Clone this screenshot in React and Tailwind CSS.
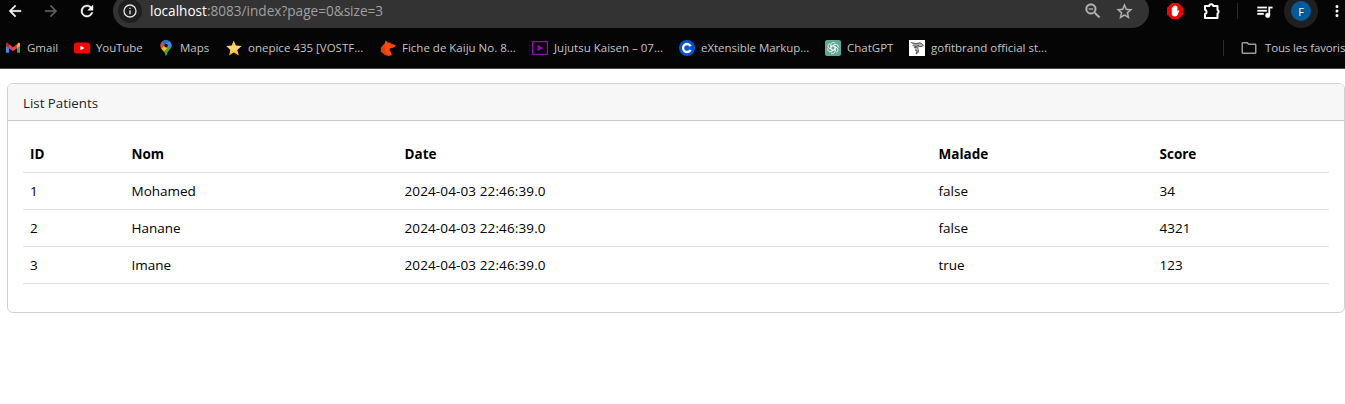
const PATIENTS = [
  { id: 1, nom: 'Mohamed', date: '2024-04-03 22:46:39.0', malade: 'false', score: 34 },
  { id: 2, nom: 'Hanane', date: '2024-04-03 22:46:39.0', malade: 'false', score: 4321 },
  { id: 3, nom: 'Imane', date: '2024-04-03 22:46:39.0', malade: 'true', score: 123 },
];

function Icon({ d, className }) {
  return (
    <svg viewBox="0 0 24 24" fill="currentColor" className={`block shrink-0 ${className}`}>
      <path d={d} />
    </svg>
  );
}

const BACK = 'M20 11H7.83l5.59-5.59L12 4l-8 8 8 8 1.41-1.41L7.83 13H20v-2z';
const FORWARD = 'M12 4l-1.41 1.41L16.17 11H4v2h12.17l-5.58 5.59L12 20l8-8z';
const RELOAD =
  'M17.65 6.35A7.96 7.96 0 0 0 12 4a8 8 0 1 0 7.73 10h-2.08A6 6 0 1 1 12 6c1.66 0 3.14.69 4.22 1.78L13 11h7V4l-2.35 2.35z';
const INFO =
  'M11 7h2v2h-2zm0 4h2v6h-2zm1-9a10 10 0 1 0 0 20 10 10 0 0 0 0-20zm0 18a8 8 0 1 1 0-16 8 8 0 0 1 0 16z';
const ZOOM_OUT =
  'M15.5 14h-.79l-.28-.27A6.47 6.47 0 0 0 16 9.5 6.5 6.5 0 1 0 9.5 16c1.61 0 3.09-.59 4.23-1.57l.27.28v.79l5 4.99L20.49 19l-4.99-5zm-6 0a4.5 4.5 0 1 1 0-9 4.5 4.5 0 0 1 0 9zM7 9h5v1.2H7z';
const STAR =
  'M22 9.24l-7.19-.62L12 2 9.19 8.63 2 9.24l5.46 4.73L5.82 21 12 17.27 18.18 21l-1.63-7.03L22 9.24zM12 15.4l-3.76 2.27 1-4.28-3.32-2.88 4.38-.38L12 6.1l1.71 4.04 4.38.38-3.32 2.88 1 4.28L12 15.4z';
const QUEUE =
  'M15 6H3v2h12V6zm0 4H3v2h12v-2zM3 16h8v-2H3v2zM17 6v8.18c-.31-.11-.65-.18-1-.18a3 3 0 1 0 3 3V8h3V6h-5z';
const DOTS =
  'M12 8a2 2 0 1 0 0-4 2 2 0 0 0 0 4zm0 2a2 2 0 1 0 0 4 2 2 0 0 0 0-4zm0 6a2 2 0 1 0 0 4 2 2 0 0 0 0-4z';
const FOLDER =
  'M9.17 6l2 2H20v10H4V6h5.17M10 4H4c-1.1 0-2 .9-2 2v12c0 1.1.9 2 2 2h16c1.1 0 2-.9 2-2V8c0-1.1-.9-2-2-2h-8l-2-2z';

function Toolbar() {
  return (
    <div className="-mt-1.5 flex h-[34px] shrink-0 items-center">
      <Icon d={BACK} className="ml-1.5 size-[18px] stroke-white stroke-[0.5] text-white" />
      <Icon d={FORWARD} className="ml-[18px] size-[18px] stroke-[#626262] stroke-[0.4] text-[#626262]" />
      <Icon d={RELOAD} className="ml-[18px] size-[18px] stroke-white stroke-[0.6] text-white" />
      <div className="ml-[17px] flex h-[34px] w-[1036px] shrink-0 items-center rounded-full bg-[#333333] pl-[5px] pr-[15px]">
        <div className="flex size-6 items-center justify-center rounded-full bg-[#1f1f1f]">
          <Icon d={INFO} className="size-4 text-[#e3e3e3]" />
        </div>
        <div className="ml-2 whitespace-pre text-[13.6px] leading-5 text-[#a0a0a0]">
          <span className="text-white">localhost</span>:8083/index?page=0&amp;size=3
        </div>
        <Icon d={ZOOM_OUT} className="ml-auto size-[20px] stroke-[#b4b4b4] stroke-[0.4] text-[#b4b4b4]" />
        <Icon d={STAR} className="ml-[12px] size-[19px] stroke-[#b4b4b4] stroke-[0.3] text-[#b4b4b4]" />
      </div>
      <svg viewBox="0 0 16 16" className="ml-[18px] size-4 shrink-0">
        <path d="M4.7 0h6.6L16 4.7v6.6L11.3 16H4.7L0 11.3V4.7z" fill="#f70000" />
        <path
          d="M4.800 8V5a.7.7 0 0 1 1.400 0V3.500a.7.7 0 0 1 1.400 0V2.900a.7.7 0 0 1 1.400 0v.8a.7.7 0 0 1 1.400 0v4.700l.8-1c.5-.5 1.300-.2 1 .5L10.700 11.500C10.100 12.900 9.300 13.400 8 13.400c-2.200 0-3.200-1.300-3.200-3z"
          fill="#fff"
        />
      </svg>
      <svg viewBox="0 0 18 18" fill="none" stroke="#fff" strokeWidth="2" strokeLinejoin="round" className="ml-[20px] size-[18px] shrink-0">
        <path d="M2 4h4.200a2 1.800 0 0 1 4 0H14.500v4a2 2 0 0 1 0 3.600V16H2v-4a2.200 2.200 0 0 0 0-4.200z" />
      </svg>
      <div className="ml-[16px] h-4 w-px shrink-0 bg-[#2c2c2c]" />
      <Icon d={QUEUE} className="ml-[17px] size-[19px] stroke-white stroke-[0.3] text-white" />
      <div className="ml-2.5 flex size-[34px] shrink-0 items-center justify-center rounded-full bg-[#1f1f1f]">
        <div className="flex size-5 items-center justify-center rounded-full bg-[#005a9e] text-[11px] leading-none text-white">F</div>
      </div>
      <Icon d={DOTS} className="ml-2.5 size-[18px] text-white" />
    </div>
  );
}

const GmailIcon = (
  <svg viewBox="0 0 16 16" className="size-4">
    <path d="M1 3.500v9.300h3V6.500z" fill="#4285f4" />
    <path d="M12 6.500v6.300h3V3.500z" fill="#34a853" />
    <path d="M12 4.500v3.700l3-2.300V4c0-1.300-1.300-1.600-2-1z" fill="#fbbc04" />
    <path d="M4 4.500v3.700L1 5.900V4c0-1.300 1.300-1.600 2-1z" fill="#c5221f" />
    <path d="M4 4.200l4 3.100 4-3.100v4L8 11.300 4 8.200z" fill="#ea4335" />
  </svg>
);

const YouTubeIcon = (
  <svg viewBox="0 0 16 16" className="size-4">
    <rect y="2.500" width="16" height="11" rx="2.600" fill="#f00" />
    <path d="M6.400 5.700v4.600L10.500 8z" fill="#fff" />
  </svg>
);

const MapsIcon = (
  <svg viewBox="0 0 16 16" className="size-4">
    <defs>
      <clipPath id="pin">
        <path d="M8 0a5.600 5.600 0 0 1 5.600 5.600C13.600 9.600 9.500 10.500 8.700 15q-.7 1.400-1.400 0C6.500 10.500 2.400 9.600 2.400 5.600A5.600 5.600 0 0 1 8 0z" />
      </clipPath>
    </defs>
    <g clipPath="url(#pin)">
      <path d="M0 0h16v16H0z" fill="#34a853" />
      <path d="M2.500 9.500L8 3l2.500 4.500L5.500 12z" fill="#fbbc04" />
      <path d="M0 0h4l3 4.500L3.200 9H0z" fill="#ea4335" />
      <path d="M3.500 1.800L7 4.600 13 0H4z" fill="#1a73e8" />
      <path d="M7.500 6L13 0l2 5.500-2 .5-4 3z" fill="#4285f4" />
    </g>
    <circle cx="8" cy="5.600" r="1.800" fill="#111" />
  </svg>
);

const GoldStarIcon = (
  <svg viewBox="0 0 16 16" className="size-4">
    <defs>
      <linearGradient id="gold" x1="0" y1="0" x2="0" y2="1">
        <stop offset="0" stopColor="#ffb13b" />
        <stop offset=".5" stopColor="#ffd873" />
        <stop offset="1" stopColor="#f9b51c" />
      </linearGradient>
    </defs>
    <path d="M7.700.4l2.200 5.200 5.700.5-4.300 3.800 1.500 5.600-5-3-4.700 3 1.200-5.600L.3 6.100l5.400-.5z" fill="url(#gold)" />
  </svg>
);

const FoxIcon = (
  <svg viewBox="0 0 16 16" className="size-4">
    <path d="M5.600.5L8 2.500l2.500.2 1.300 1.200 4 1-.9 1.800-1.800 1-3.100.6-.4 2 1 1.200.5 2 1 1.600-2.500.6-3.800-.4L2.500 13 .4 11l.8-1.300-.4-1.500 1.700-2.500L4.500 4z" fill="#ff4a0b" />
    <path d="M4.500 4L2.500 6l-1.700 2.300L2.500 13l3.300 2.300 3.800.4L6 12.500 5 8.500z" fill="#e83e05" />
  </svg>
);

const PlayerIcon = (
  <svg viewBox="0 0 16 16" className="size-4">
    <rect x=".6" y="1.600" width="14.800" height="12.800" fill="#0d0310" stroke="#8a13a5" strokeWidth="1.200" />
    <path d="M5.700 4.800v6.400L11 8z" fill="#8a13a5" />
  </svg>
);

const CourseraIcon = (
  <svg viewBox="0 0 16 16" className="size-4">
    <circle cx="8" cy="8" r="8" fill="#0056d2" />
    <path d="M11.600 6.100A4 4 0 1 0 11.600 9.900" fill="none" stroke="#fff" strokeWidth="2.300" />
  </svg>
);

const KNOT = [0, 60, 120, 180, 240, 300];

const ChatGptIcon = (
  <svg viewBox="0 0 16 16" className="size-4">
    <rect width="16" height="16" rx="2" fill="#5fa796" />
    <g fill="none" stroke="#fff" strokeWidth=".75">
      {KNOT.map((angle) => (
        <path key={angle} d="M5.900 9.200V4.800a2.500 2.500 0 0 1 4.400-1.500M6 6.800L9.700 4.700" transform={`rotate(${angle} 8 8)`} />
      ))}
    </g>
  </svg>
);

const WolfIcon = (
  <svg viewBox="0 0 16 16" className="size-4">
    <path d="M0 0h16v16H0z" fill="#fff" />
    <path d="M2 2.500l5 .6 4-.6 3.500 2.500-1.200 1.500-2.800.3-1.200 1.500L9.600 9.500 9 12.500l-2 1.500.5-2.800-1.500-.8.5-1.300-1.800-1.900 1.500-.6L3.600 6l1.500-.3z" fill="#b5b5b5" />
    <path d="M2 2.500l5 1.300 4-1 3.400 2.200-1.400 1.600-3.500-.3M3.500 5.600l3.500.7 3-1M5 7.800l2.600-.6 1.800 1.600M6 10l2 .6-.8 3.200 2-1.400.4-2.600" fill="none" stroke="#333" strokeWidth=".75" />
  </svg>
);

const BOOKMARKS = [
  { icon: GmailIcon, label: 'Gmail', width: 'w-[31px]' },
  { icon: YouTubeIcon, label: 'YouTube', width: 'w-[46px] tracking-[-0.1px]' },
  { icon: MapsIcon, label: 'Maps', width: 'w-[30px]' },
  { icon: GoldStarIcon, label: 'onepice 435 [VOSTF...', width: 'w-[116px]' },
  { icon: FoxIcon, label: 'Fiche de Kaiju No. 8...', width: 'w-[114px]' },
  { icon: PlayerIcon, label: 'Jujutsu Kaisen – 07...', width: 'w-[109px]' },
  { icon: CourseraIcon, label: 'eXtensible Markup...', width: 'w-[108px] tracking-[-0.05px]' },
  { icon: ChatGptIcon, label: 'ChatGPT', width: 'w-[46px]' },
  { icon: WolfIcon, label: 'gofitbrand official st...', width: 'w-[116px]' },
];

function BookmarksBar() {
  return (
    <div className="flex h-10 items-center whitespace-nowrap pl-[5px] text-[11.5px] leading-4 text-[#c3c3c3]">
      <div className="flex gap-4">
        {BOOKMARKS.map(({ icon, label, width }) => (
          <div key={label} className="flex items-center gap-1.5">
            {icon}
            <span className={width}>{label}</span>
          </div>
        ))}
      </div>
      <div className="ml-auto flex w-[122px] shrink-0 items-center">
        <div className="h-4 w-px shrink-0 bg-[#2c2c2c]" />
        <Icon d={FOLDER} className="ml-4 size-[18px] text-[#9a9a9a]" />
        <span className="ml-[7px] tracking-[-0.15px]">Tous les favoris</span>
      </div>
    </div>
  );
}

function PatientsCard() {
  return (
    <div className="ml-[7px] mt-3.5 h-[230px] w-[1338px] overflow-hidden rounded-[6px] border border-[#d0d0d0] bg-white">
      <div className="h-[37px] border-b border-[#c9c9c9] bg-[#f7f7f7] pl-[15px] text-[13.3px] leading-[39px] text-[#212529]">
        List Patients
      </div>
      <div className="px-[15px] pt-[14px]">
        <table className="w-[1306px] table-fixed border-collapse text-left text-[13.5px] leading-[22px] text-black">
          <colgroup>
            <col className="w-[101.5px]" />
            <col className="w-[273px]" />
            <col className="w-[534px]" />
            <col className="w-[221px]" />
            <col className="w-[176.5px]" />
          </colgroup>
          <thead>
            <tr className="h-[37px] border-b border-[#dee2e6]">
              {['ID', 'Nom', 'Date', 'Malade', 'Score'].map((title) => (
                <th key={title} className="px-[7px] pb-0 pt-0.5 font-bold">{title}</th>
              ))}
            </tr>
          </thead>
          <tbody>
            {PATIENTS.map((p) => (
              <tr key={p.id} className="h-[37px] border-b border-[#dee2e6]">
                <td className="px-[7px] py-0">{p.id}</td>
                <td className="px-[7px] py-0">{p.nom}</td>
                <td className="px-[7px] py-0 tracking-[0.12px]">{p.date}</td>
                <td className="px-[7px] py-0">{p.malade}</td>
                <td className="px-[7px] py-0">{p.score}</td>
              </tr>
            ))}
          </tbody>
        </table>
      </div>
    </div>
  );
}

export default function App() {
  return (
    <div className="h-[404px] w-[1345px] overflow-hidden bg-white font-['Open_Sans','Noto_Sans',sans-serif]">
      <div className="flex h-[69px] flex-col border-b border-[#4a4747] bg-[#050505]">
        <Toolbar />
        <BookmarksBar />
      </div>
      <PatientsCard />
    </div>
  );
}
